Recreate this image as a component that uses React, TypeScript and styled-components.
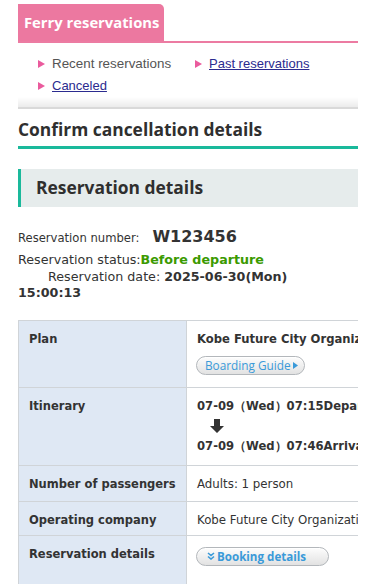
import styled, { createGlobalStyle } from "styled-components";

const GlobalStyle = createGlobalStyle`
  html, body {
    margin: 0;
    padding: 0;
    background: #ffffff;
  }
  body {
    font-family: "DejaVu Sans", Verdana, sans-serif;
    color: #333333;
  }
`;

const Page = styled.div`
  width: 340px;
  margin: 0 0 0 18px;
  padding-top: 4px;
  overflow: hidden;
  height: 580px;
`;

const TabBar = styled.div`
  border-bottom: 2px solid #ec7ba2;
  display: flex;
`;

const Tab = styled.div`
  background: #ec78a0;
  color: #ffffff;
  font-family: "Open Sans", "DejaVu Sans", sans-serif;
  font-weight: 700;
  font-size: 14.8px;
  height: 37px;
  line-height: 36px;
  padding: 0 5px 0 6px;
  border-radius: 0 5px 0 0;
  white-space: nowrap;
`;

const SubNav = styled.ul`
  list-style: none;
  margin: 0;
  padding: 13px 0 3px 20px;
  display: flex;
  flex-wrap: wrap;
  row-gap: 6px;
`;

const NavItem = styled.li<{ $wide?: boolean }>`
  font-family: "Liberation Sans", Arial, sans-serif;
  font-size: 13.4px;
  line-height: 16px;
  width: ${(p) => (p.$wide ? "157px" : "auto")};
  display: flex;
  align-items: center;
  gap: 7px;
  &::before {
    content: "";
    width: 0;
    height: 0;
    border-top: 4px solid transparent;
    border-bottom: 4px solid transparent;
    border-left: 7px solid #ea5b9d;
  }
`;

const Current = styled.span`
  color: #555555;
`;

const NavLink = styled.a`
  color: #2b2b8f;
  text-decoration: underline;
  font-size: 13px;
`;

const Shade = styled.div`
  height: 10px;
  background: linear-gradient(#ffffff, #ebebeb);
  border-bottom: 2px solid #d9d9d9;
`;

const PageTitle = styled.h1`
  margin: 0;
  padding: 8px 0 5px;
  line-height: 24px;
  font-family: "Open Sans", "DejaVu Sans", sans-serif;
  font-size: 17.4px;
  font-weight: 700;
  color: #2f2f2f;
  border-bottom: 3px solid #1ab99b;
  white-space: nowrap;
`;

const SectionTitle = styled.h2`
  margin: 20px 0 0;
  background: #e6ecec;
  border-left: 3px solid #1ab99b;
  height: 38px;
  line-height: 36px;
  padding-left: 15px;
  font-family: "Open Sans", "DejaVu Sans", sans-serif;
  font-size: 17.4px;
  font-weight: 700;
  color: #2f2f2f;
`;

const Info = styled.div`
  margin-top: 19px;
  font-size: 12.7px;
  color: #333333;
`;

const InfoLine = styled.div<{ $indent?: boolean }>`
  line-height: 16.5px;
  padding-left: ${(p) => (p.$indent ? "30px" : "0")};
`;

const NumberRow = styled.div`
  line-height: 22px;
  margin-bottom: 3px;
  font-size: 11.6px;
`;

const Number = styled.span`
  font-size: 16px;
  font-weight: 700;
  margin-left: 13px;
`;

const Status = styled.span`
  color: #3b9a00;
  font-weight: 700;
`;

const Strong = styled.span`
  font-weight: 700;
`;

const Table = styled.table`
  margin-top: 18px;
  border-collapse: collapse;
  width: 400px;
  font-size: 11.8px;
`;

const Row = styled.tr<{ $h: number }>`
  height: ${(p) => p.$h}px;
`;

const Label = styled.th`
  width: 147px;
  background: #dfe8f4;
  border: 1px solid #d0d4d8;
  text-align: left;
  vertical-align: top;
  padding: 10px 10px 7px;
  line-height: 16px;
  font-size: 11.5px;
  font-weight: 700;
  color: #333333;
  white-space: nowrap;
`;

const Value = styled.td<{ $bold?: boolean }>`
  border-top: 1px solid #d0d4d8;
  border-bottom: 1px solid #d0d4d8;
  vertical-align: top;
  padding: 10px 10px 7px;
  line-height: 16px;
  font-size: ${(p) => (p.$bold ? "11.6px" : "11.8px")};
  font-weight: ${(p) => (p.$bold ? 700 : 400)};
  white-space: nowrap;
  color: #333333;
`;

const Pill = styled.span<{ $wide?: boolean }>`
  display: inline-flex;
  align-items: center;
  box-sizing: border-box;
  gap: 2px;
  margin: ${(p) => (p.$wide ? "1px 0 0 -1px" : "9px 0 0 -1px")};
  height: 19px;
  padding: 0 ${(p) => (p.$wide ? "10px" : "6px")} 0 ${(p) => (p.$wide ? "10px" : "8px")};
  width: ${(p) => (p.$wide ? "133px" : "auto")};
  border: 1px solid #b3b7bb;
  border-radius: 10px;
  background: linear-gradient(#fdfdfd, #e2e2e2);
  box-shadow: inset 0 1px 0 #ffffff;
  color: #3a9ad9;
  font-family: "Open Sans", "DejaVu Sans", sans-serif;
  font-size: ${(p) => (p.$wide ? "11.6px" : "11.8px")};
  font-weight: ${(p) => (p.$wide ? 700 : 400)};
  line-height: 17px;
`;

const Arrow = styled.div`
  margin: 5px 0 5px 13px;
  line-height: 0;
`;

const App = () => {
  return (
    <>
      <GlobalStyle />
      <Page>
        <TabBar>
          <Tab>Ferry reservations</Tab>
        </TabBar>
        <SubNav>
          <NavItem $wide>
            <Current>Recent reservations</Current>
          </NavItem>
          <NavItem>
            <NavLink href="#">Past reservations</NavLink>
          </NavItem>
          <NavItem>
            <NavLink href="#">Canceled</NavLink>
          </NavItem>
        </SubNav>
        <Shade />
        <PageTitle>Confirm cancellation details</PageTitle>
        <SectionTitle>Reservation details</SectionTitle>
        <Info>
          <NumberRow>
            Reservation number:<Number>W123456</Number>
          </NumberRow>
          <InfoLine>
            Reservation status:<Status>Before departure</Status>
          </InfoLine>
          <InfoLine $indent>
            Reservation date: <Strong>2025-06-30(Mon)</Strong>
          </InfoLine>
          <InfoLine>
            <Strong>15:00:13</Strong>
          </InfoLine>
        </Info>
        <Table>
          <tbody>
            <Row $h={67}>
              <Label>Plan</Label>
              <Value $bold>
                Kobe Future City Organization
                <br />
                <Pill>
                  Boarding Guide
                  <svg width="5" height="7" viewBox="0 0 5 7">
                    <path d="M0 0 L5 3.5 L0 7 Z" fill="#3a9ad9" />
                  </svg>
                </Pill>
              </Value>
            </Row>
            <Row $h={78}>
              <Label>Itinerary</Label>
              <Value $bold>
                07-09（Wed）07:15Departure
                <Arrow>
                  <svg width="14" height="14" viewBox="0 0 14 14">
                    <path d="M4 0 H10 V7 H14 L7 14 L0 7 H4 Z" fill="#333" />
                  </svg>
                </Arrow>
                07-09（Wed）07:46Arrival
              </Value>
            </Row>
            <Row $h={36}>
              <Label>Number of passengers</Label>
              <Value>Adults: 1 person</Value>
            </Row>
            <Row $h={34}>
              <Label>Operating company</Label>
              <Value>Kobe Future City Organization</Value>
            </Row>
            <Row $h={60}>
              <Label>Reservation details</Label>
              <Value>
                <Pill $wide>
                  <svg width="8" height="8" viewBox="0 0 8 8">
                    <path d="M1 1 L4 3.5 L7 1 M1 4.5 L4 7 L7 4.5" stroke="#3a9ad9" strokeWidth="1.6" fill="none" />
                  </svg>
                  Booking details
                </Pill>
              </Value>
            </Row>
          </tbody>
        </Table>
      </Page>
    </>
  );
};

export default App;
